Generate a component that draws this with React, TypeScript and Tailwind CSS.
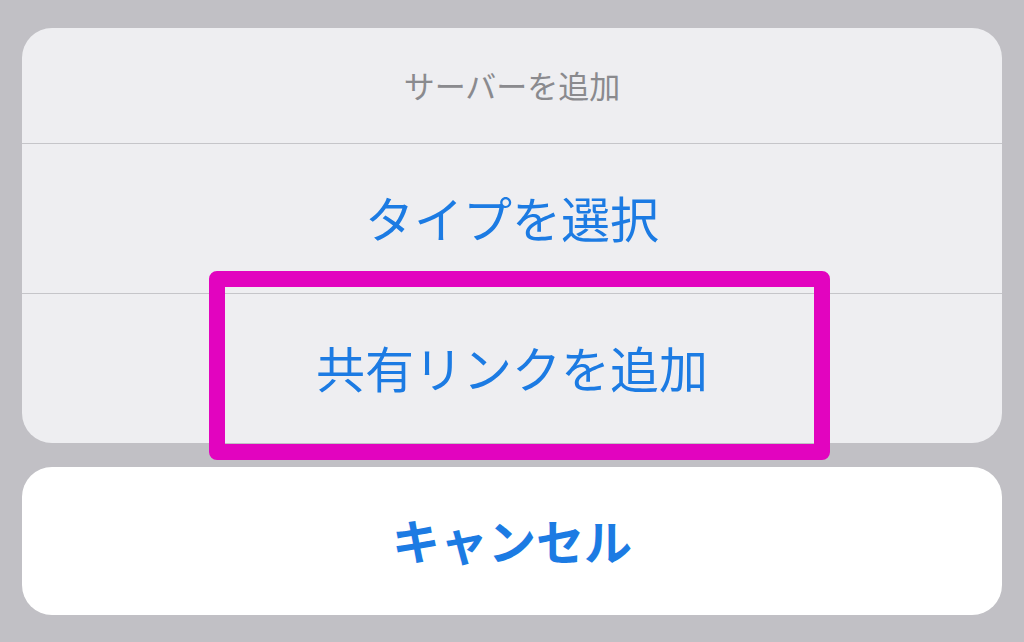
export default function App() {
  const font = { fontFamily: '"Noto Sans CJK JP", "Noto Sans", sans-serif' };
  return (
    <div
      className="relative h-[642px] w-[1024px] overflow-hidden bg-[#c1c0c5] px-[22px] pt-[28px]"
      style={font}
    >
      {/* action sheet */}
      <div className="flex h-[415px] flex-col overflow-hidden rounded-[30px] bg-[#eeeef1]">
        <div className="flex h-[116px] items-center justify-center border-b-[1.5px] border-[#c5c5c9] pb-[2px] text-[31px] leading-none text-[#8a8a8e]">
          サーバーを追加
        </div>
        <div className="flex h-[150px] items-center justify-center border-b-[1.5px] border-[#c5c5c9] pb-[4px] text-[49px] leading-none text-[#1c7be3]">
          タイプを選択
        </div>
        <div className="flex flex-1 items-center justify-center pb-[4px] text-[49px] leading-none text-[#1c7be3]">
          共有リンクを追加
        </div>
      </div>

      <div className="mt-[24px] flex h-[148px] items-center justify-center rounded-[30px] bg-white pb-[4px] text-[48px] font-bold leading-none text-[#1c7be3]">
        キャンセル
      </div>

      {/* highlight overlay */}
      <div className="absolute left-[209px] top-[271px] h-[189px] w-[621px] rounded-[8px] border-[16px] border-[#e204bf]" />
    </div>
  );
}
